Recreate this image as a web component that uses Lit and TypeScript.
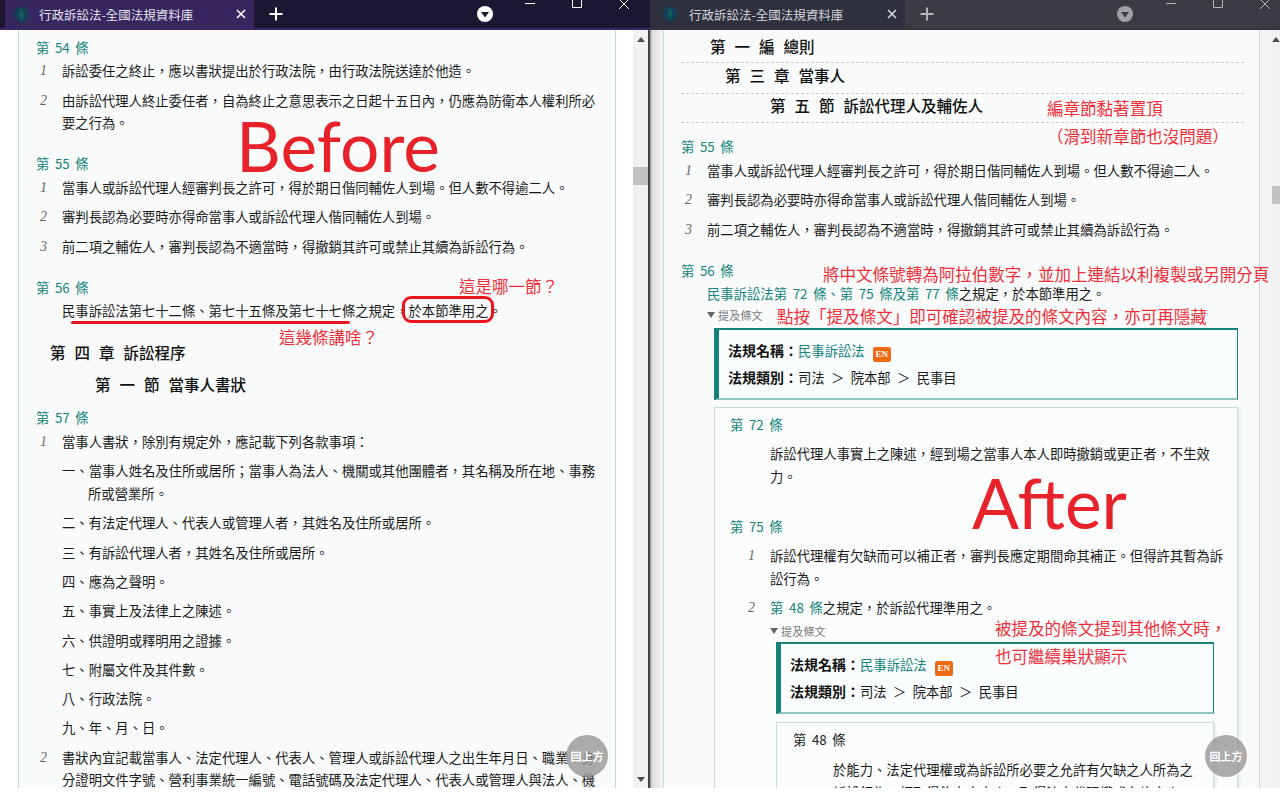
import { LitElement, html, css } from "lit";
import { customElement } from "lit/decorators.js";

const TITLE = "行政訴訟法-全國法規資料庫";

@customElement("app-root")
export class AppRoot extends LitElement {
  static styles = css`
    :host { display: block; width: 1280px; height: 800px; background: #fff; position: relative; overflow: hidden;
      font-family: "Noto Sans CJK TC", "Noto Sans", sans-serif; font-size: 13.33px; color: #1a1a1a; }
    .screen { display: grid; grid-template-columns: 650px 630px; height: 788px; }
    .win { height: 788px; overflow: hidden; display: flex; flex-direction: column; position: relative; }
    .bar { height: 28px; flex: none; display: flex; align-items: center; color: #fff; }
    .left .bar { background: #1d1733; border-bottom: 2px solid #37265f; padding-left: 5px; }
    .right .bar { background: #3b3b43; border-bottom: 2px solid #33343c; color: #b9b9bd; }
    .tab { height: 28px; width: 249px; flex: none; display: flex; align-items: center; box-sizing: border-box; font-size: 12.5px; color: #e4e2ea; }
    .left .tab { background: #37265f; padding-left: 8px; }
    .right .tab { width: 255px; background: #2e313d; padding-left: 12px; color: #d4d5d9; }
    .fav { width: 17px; height: 17px; margin-right: 9px; flex: none; }
    .right .fav { width: 16px; height: 16px; margin-right: 11px; }
    .tabname { flex: 1; white-space: nowrap; }
    .x { width: 12px; height: 12px; margin-right: 7px; flex: none; }
    .plus { width: 14px; height: 14px; margin-left: 15px; flex: none; }
    .drop { width: 18px; height: 18px; flex: none; }
    .left .drop { margin-left: 193px; }
    .right .drop { margin-left: 182px; }
    .ctl { display: flex; align-items: flex-start; height: 28px; flex: none; }
    .left .ctl { margin-left: 29px; gap: 33px; }
    .right .ctl { margin-left: 30px; gap: 33px; }
    .body { flex: 1; min-height: 0; display: flex; position: relative; }
    .left .body { background: #fff; }
    .right .body { background: linear-gradient(90deg, #8f8f8f 0, #ddd 2px, #f3f3f3 12px); }
    .scroller { flex: 1; min-width: 0; overflow: hidden; }
    .left .scroller { padding-left: 18px; padding-right: 17px; }
    .right .scroller { padding-left: 13px; padding-right: 12px; }
    .sb { width: 16px; flex: none; background: #f1f1f1; display: flex; flex-direction: column; align-items: center; position: relative; }
    .right .sb { width: 8px; background: #f1f1f1; }
    .left .sb { border-right: 2px solid #444; width: 15px; }
    .sb .up { margin-top: 7px; width: 8px; height: 5px; }
    .sb .thumb { width: 100%; height: 18px; background: #c1c1c1; }
    .left .sb .thumb { margin-top: 125px; }
    .right .sb .thumb { margin-top: 144px; }
    .sb .spring { flex: 1; }
    .sb .down { margin-bottom: 6px; width: 8px; height: 5px; }
    .card { box-sizing: border-box; height: 100%; background: #f8fbfa; border-left: 1px solid #bcdcdc; border-right: 1px solid #bcdcdc; overflow: hidden; }
    .left .card { padding: 6.67px 18px 0 17px; }
    .right .card { padding: 0 15px 0 17px; }
    .title { line-height: 22.66px; color: #16837c; margin-bottom: 1px; white-space: pre; word-spacing: 2.6px; }
    .title.black { color: #222; }
    .art { margin-top: 18.33px; }
    .art.first { margin-top: 0; }
    .row { display: flex; line-height: 22.66px; margin-bottom: 6.67px; }
    .num { width: 26px; flex: none; padding-left: 4px; box-sizing: border-box; font: italic 14px/22px "Liberation Serif", serif; color: #666; }
    .txt { flex: 1; min-width: 0; }
    .hang { padding-left: 26px; text-indent: -26px; }
    .plain { padding-left: 26px; line-height: 22.66px; margin-top: 1px; white-space: nowrap; }
    .sec { font-size: 15.5px; font-weight: 500; color: #111; white-space: pre; line-height: 22px; word-spacing: 5.5px; }
    .s1 { padding-left: 14px; margin-top: 18px; }
    .s2 { padding-left: 59px; margin-top: 10px; margin-bottom: 12.5px; }
    .sticky { border-bottom: 1px dashed #ccc; white-space: pre; }
    .sticky.a { padding-left: 29px; height: 32px; line-height: 32px; }
    .sticky.b { padding-left: 44px; height: 30px; line-height: 24px; }
    .sticky.c { padding-left: 89px; height: 28px; line-height: 22px; }
    .link { color: #16837c; word-spacing: 2.7px; }
    .rarts { margin-top: 13.4px; }
    .toggle { font-size: 11px; color: #777; line-height: 16px; display: flex; align-items: center; gap: 3px; letter-spacing: 0.2px; }
    .tri { width: 8px; height: 6px; flex: none; }
    .law { box-sizing: border-box; background: #f9fdfd; border: 1px solid #16837c; border-left: 5px solid #14827a; border-bottom: 2px solid #8cc4c0; border-top-width: 2px; height: 72px; padding: 7px 0 0 9px; line-height: 27px; }
    .law b { font-weight: 700; color: #111; font-size: 14px; }
    .en { display: inline-block; width: 18px; height: 15px; border-radius: 2px; background: #f16a12; color: #fff; font: bold 9px/15px "Liberation Serif", serif; text-align: center; margin-left: 8px; vertical-align: -1px; }
    .sep { display: inline-block; width: 26px; text-align: center; }
    .box { box-sizing: border-box; background: #fbfdfd; border: 1px solid #c5dcdc; border-bottom: none; box-shadow: 2px 2px 3px #e3e8e8; }
    .box.outer { margin-left: 33px; margin-top: 7px; width: 524px; padding: 6px 10px 0 15px; height: 400px; }
    .box.inner { width: 438px; margin-top: 8px; height: 80px; padding: 6px 15px 0 16px; }
    .rows-indent { padding-left: 40px; line-height: 23px; margin-top: 6px; }
    .indent2 { padding-left: 14px; margin-top: 6px; }
    .ref56 { margin-left: 26px; margin-top: 0.6px; }
    .wide { width: 524px; margin: 5px 0 0 7px; }
    .ref48 { margin-left: 40px; margin-top: -3px; }
    .narrow { width: 438px; margin: 3px 0 0 6px; }
    .inner-wrap { margin-left: 6px; }
    .after72 { margin-top: 28px; }
    .top { position: absolute; width: 42px; height: 42px; border-radius: 50%; background: rgba(150,150,150,.8); color: #fff; font-size: 11px; font-weight: 700; display: flex; align-items: center; justify-content: center; white-space: nowrap; top: 735px; z-index: 3; }
    .note { position: absolute; color: #ee2f3a; font-size: 16.55px; line-height: 22px; white-space: nowrap; font-weight: 400; z-index: 4; }
    .big { position: absolute; color: #e8222a; font-family: Lato, sans-serif; font-size: 69.5px; line-height: 80px; white-space: nowrap; z-index: 4; font-weight: 400; }
    .uline { position: absolute; left: 71px; top: 321px; width: 279px; height: 3px; background: #e8141f; border-radius: 2px; z-index: 4; }
    .oval { position: absolute; left: 402px; top: 296px; width: 92px; height: 27px; box-sizing: border-box; border: 3px solid #e8141f; border-radius: 9px; z-index: 4; }
  `;

  bar(right: boolean) {
    const ic = right ? "#b4b4b8" : "#fff";
    const fill = right ? "#a0a0a5" : "#fff";
    const dark = right ? "#3b3b43" : "#1d1733";
    return html`<div class="bar">
      <div class="tab">
        <svg class="fav" viewBox="0 0 16 16"><circle cx="8" cy="8" r="7.5" fill="#163d55"/><path d="M8 2 C5 5 5 11 8 14 C11 11 11 5 8 2Z" fill="#0f5c5a"/></svg>
        <span class="tabname">${TITLE}</span>
        <svg class="x" viewBox="0 0 12 12"><path d="M2 2 L10 10 M10 2 L2 10" stroke="${right ? "#d8d8dc" : "#fff"}" stroke-width="1.6" fill="none"/></svg>
      </div>
      <svg class="plus" viewBox="0 0 14 14"><path d="M7 0.5 V13.5 M0.5 7 H13.5" stroke="${ic}" stroke-width="2" fill="none"/></svg>
      <svg class="drop" viewBox="0 0 18 18"><circle cx="9" cy="9" r="8" fill="${fill}"/><path d="M5 7 H13 L9 12.5Z" fill="${dark}"/></svg>
      <div class="ctl">
        <svg width="14" height="12" viewBox="0 0 14 12"><path d="M2 3.5 H12" stroke="${ic}" stroke-width="1"/></svg>
        <svg width="14" height="12" viewBox="0 0 14 12"><path d="M2.5 0 V7.5 H11.5 V0" stroke="${ic}" stroke-width="1" fill="none"/></svg>
        <svg width="14" height="12" viewBox="0 0 14 12"><path d="M2 -1 L12 9 M12 -1 L2 9" stroke="${ic}" stroke-width="1" fill="none"/></svg>
      </div>
    </div>`;
  }

  row(n: string, t: unknown) {
    return html`<div class="row"><span class="num">${n}</span><span class="txt">${t}</span></div>`;
  }
  sub(t: string) {
    return html`<div class="row"><span class="num"></span><span class="txt hang">${t}</span></div>`;
  }
  scrollbar(down: boolean) {
    return html`<div class="sb">
      <svg class="up" viewBox="0 0 8 5"><path d="M4 0 L8 5 H0Z" fill="#505050"/></svg>
      <div class="thumb"></div><div class="spring"></div>
      ${down ? html`<svg class="down" viewBox="0 0 8 5"><path d="M0 0 H8 L4 5Z" fill="#505050"/></svg>` : ""}
    </div>`;
  }
  toggle() {
    return html`<div class="toggle"><svg class="tri" viewBox="0 0 8 6"><path d="M0 0 H8 L4 6Z" fill="#666"/></svg>提及條文</div>`;
  }
  law() {
    return html`<div class="law">
      <div><b>法規名稱：</b><span class="link">民事訴訟法</span><span class="en">EN</span></div>
      <div><b>法規類別：</b>司法<span class="sep">＞</span>院本部<span class="sep">＞</span>民事目</div>
    </div>`;
  }

  leftPane() {
    return html`<div class="card">
      <div class="art first">
        <div class="title">第 54 條</div>
        ${this.row("1", "訴訟委任之終止，應以書狀提出於行政法院，由行政法院送達於他造。")}
        ${this.row("2", "由訴訟代理人終止委任者，自為終止之意思表示之日起十五日內，仍應為防衛本人權利所必要之行為。")}
      </div>
      <div class="art">
        <div class="title">第 55 條</div>
        ${this.row("1", "當事人或訴訟代理人經審判長之許可，得於期日偕同輔佐人到場。但人數不得逾二人。")}
        ${this.row("2", "審判長認為必要時亦得命當事人或訴訟代理人偕同輔佐人到場。")}
        ${this.row("3", "前二項之輔佐人，審判長認為不適當時，得撤銷其許可或禁止其續為訴訟行為。")}
      </div>
      <div class="art">
        <div class="title">第 56 條</div>
        <div class="plain">民事訴訟法第七十二條、第七十五條及第七十七條之規定，於本節準用之。</div>
      </div>
      <div class="sec s1">第 四 章 訴訟程序</div>
      <div class="sec s2">第 一 節 當事人書狀</div>
      <div class="art first">
        <div class="title">第 57 條</div>
        ${this.row("1", "當事人書狀，除別有規定外，應記載下列各款事項：")}
        ${this.sub("一、當事人姓名及住所或居所；當事人為法人、機關或其他團體者，其名稱及所在地、事務所或營業所。")}
        ${this.sub("二、有法定代理人、代表人或管理人者，其姓名及住所或居所。")}
        ${this.sub("三、有訴訟代理人者，其姓名及住所或居所。")}
        ${this.sub("四、應為之聲明。")}
        ${this.sub("五、事實上及法律上之陳述。")}
        ${this.sub("六、供證明或釋明用之證據。")}
        ${this.sub("七、附屬文件及其件數。")}
        ${this.sub("八、行政法院。")}
        ${this.sub("九、年、月、日。")}
        ${this.row("2", "書狀內宜記載當事人、法定代理人、代表人、管理人或訴訟代理人之出生年月日、職業、身分證明文件字號、營利事業統一編號、電話號碼及法定代理人、代表人或管理人與法人、機")}
      </div>
    </div>`;
  }

  rightPane() {
    return html`<div class="card">
      <div class="sec sticky a">第 一 編 總則</div>
      <div class="sec sticky b">第 三 章 當事人</div>
      <div class="sec sticky c">第 五 節 訴訟代理人及輔佐人</div>
      <div class="rarts">
        <div class="art first">
          <div class="title">第 55 條</div>
          ${this.row("1", "當事人或訴訟代理人經審判長之許可，得於期日偕同輔佐人到場。但人數不得逾二人。")}
          ${this.row("2", "審判長認為必要時亦得命當事人或訴訟代理人偕同輔佐人到場。")}
          ${this.row("3", "前二項之輔佐人，審判長認為不適當時，得撤銷其許可或禁止其續為訴訟行為。")}
        </div>
        <div class="art">
          <div class="title">第 56 條</div>
          <div class="plain"><span class="link">民事訴訟法第 72 條、第 75 條及第 77 條</span>之規定，於本節準用之。</div>
          <div class="ref56">
            ${this.toggle()}
            <div class="wide">${this.law()}</div>
          </div>
          <div class="box outer">
            <div class="title">第 72 條</div>
            <div class="rows-indent">訴訟代理人事實上之陳述，經到場之當事人本人即時撤銷或更正者，不生效力。</div>
            <div class="title after72">第 75 條</div>
            <div class="indent2">
              ${this.row("1", "訴訟代理權有欠缺而可以補正者，審判長應定期間命其補正。但得許其暫為訴訟行為。")}
              ${this.row("2", html`<span class="link">第 48 條</span>之規定，於訴訟代理準用之。`)}
            </div>
            <div class="ref48">
              ${this.toggle()}
              <div class="narrow">${this.law()}</div>
              <div class="inner-wrap">
                <div class="box inner">
                  <div class="title black">第 48 條</div>
                  <div class="rows-indent">於能力、法定代理權或為訴訟所必要之允許有欠缺之人所為之訴訟行為，經取得能力之本人、取得法定代理權或允許之人、法定代理人或有允許權人之承認，溯及於行為時發生效力。</div>
                </div>
              </div>
            </div>
          </div>
        </div>
      </div>
    </div>`;
  }

  render() {
    return html`<div class="screen">
        <section class="win left">
          ${this.bar(false)}
          <div class="body"><div class="scroller">${this.leftPane()}</div>${this.scrollbar(true)}</div>
        </section>
        <section class="win right">
          ${this.bar(true)}
          <div class="body"><div class="scroller">${this.rightPane()}</div>${this.scrollbar(false)}</div>
        </section>
      </div>
      <div class="top" style="left:566px">回上方</div>
      <div class="top" style="left:1205px">回上方</div>
      <div class="big" style="left:236px;top:105px">Before</div>
      <div class="big" style="left:972px;top:462px">After</div>
      <div class="uline"></div><div class="oval"></div>
      <div class="note" style="left:459px;top:275px">這是哪一節？</div>
      <div class="note" style="left:279px;top:326px">這幾條講啥？</div>
      <div class="note" style="left:1047px;top:97px">編章節黏著置頂</div>
      <div class="note" style="left:1047px;top:125px">（滑到新章節也沒問題）</div>
      <div class="note" style="left:823px;top:263px">將中文條號轉為阿拉伯數字，並加上連結以利複製或另開分頁</div>
      <div class="note" style="left:777px;top:305px">點按「提及條文」即可確認被提及的條文內容，亦可再隱藏</div>
      <div class="note" style="left:995px;top:617px">被提及的條文提到其他條文時，</div>
      <div class="note" style="left:995px;top:645px">也可繼續巢狀顯示</div>`;
  }
}
